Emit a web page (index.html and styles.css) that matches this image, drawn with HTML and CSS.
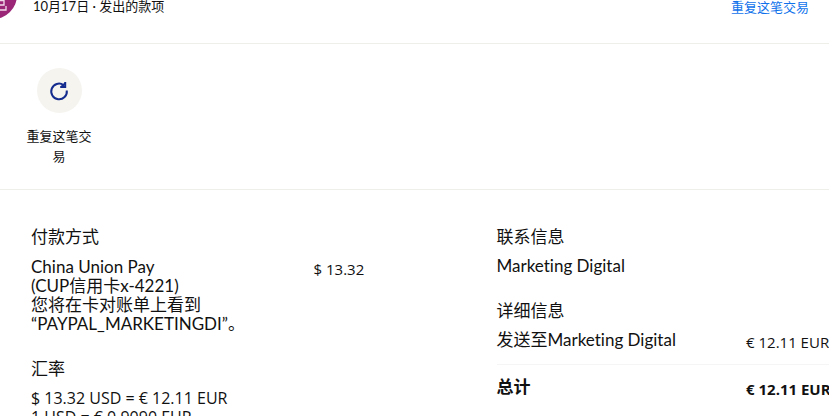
FILE: index.html
```html
<!DOCTYPE html>
<html lang="zh-CN">
<head>
  <meta charset="UTF-8" />
  <meta name="viewport" content="width=device-width, initial-scale=1.0" />
  <title>交易详情</title>
  <link rel="stylesheet" href="styles.css">
</head>
<body>
  <!-- Summary row -->
  <header class="summary">
    <div class="avatar">
      <svg width="28" height="28" viewBox="0 0 28 28" fill="none" stroke="#f3dcec" stroke-width="1.300">
        <path d="M5 7h18v13H5zM5 15.500h18M14 3v22h11v-4" />
      </svg>
    </div>
    <p class="summary-date">10月17日 · 发出的款项</p>
    <a class="repeat-link" href="#">重复这笔交易</a>
  </header>

  <!-- Actions -->
  <section class="actions">
    <button class="action" type="button">
      <span class="action-icon">
        <svg width="20" height="20" viewBox="0 0 20 20" fill="none" stroke="#142c8e" stroke-width="2">
          <path d="M17.800 9.500A7.800 7.800 0 1 1 14.500 4" />
          <path d="M16.200 1v5h-5" />
          <path d="M12.500 5.800L16 2.500" />
        </svg>
      </span>
      <span class="action-label">重复这笔交易</span>
    </button>
  </section>

  <!-- Details -->
  <main class="details">
    <div class="column payment">
      <section class="block">
        <h2>付款方式</h2>
        <div class="row">
          <p>China Union Pay<br>(CUP信用卡x-4221)<br>您将在卡对账单上看到<br>“PAYPAL_MARKETINGDI”。</p>
          <span class="amount">$ 13.32</span>
        </div>
      </section>
      <section class="block">
        <h2>汇率</h2>
        <p class="rate">$ 13.32 USD = € 12.11 EUR<br>1 USD = € 0.9090 EUR</p>
      </section>
    </div>

    <div class="column info">
      <section class="block">
        <h2>联系信息</h2>
        <p>Marketing Digital</p>
      </section>
      <section class="block">
        <h2>详细信息</h2>
        <div class="row">
          <p>发送至Marketing Digital</p>
          <span class="amount">€ 12.11 EUR</span>
        </div>
        <div class="row total">
          <p>总计</p>
          <span class="amount">€ 12.11 EUR</span>
        </div>
      </section>
    </div>
  </main>
</body>
</html>
```

FILE: styles.css
```css
* {
  box-sizing: border-box;
}
html {
  height: 100%;
  overflow: hidden;
}
body {
  margin: 0;
  height: 100%;
  overflow: hidden;
  font-family: Lato, 'Noto Sans CJK SC', sans-serif;
  font-size: 17px;
  font-variant-ligatures: none;
  line-height: 19px;
  color: #111;
  background: #fff;
}
h2, p {
  margin: 0;
}

.summary {
  display: flex;
  align-items: center;
  margin-top: -29px;
  padding: 0 20px 24px 0;
  border-bottom: 1px solid #efefea;
  font-size: 13px;
  line-height: 20px;
}
.avatar {
  display: flex;
  align-items: center;
  justify-content: flex-end;
  width: 48px;
  height: 48px;
  margin-left: -31px;
  padding: 14px 8px 6px;
  border-radius: 50%;
  background: #9b2677;
}
.summary-date {
  flex: 1;
  padding: 22px 0 0 16px;
}
.repeat-link {
  padding-top: 24px;
  color: #1072eb;
  text-decoration: none;
}

.actions {
  padding: 24px 16px 23px;
  border-bottom: 1px solid #efefea;
}
.action {
  display: flex;
  flex-direction: column;
  align-items: center;
  width: 86px;
  padding: 0 8px;
  border: none;
  background: none;
  color: inherit;
  font: inherit;
  font-size: 13px;
  line-height: 20px;
  cursor: pointer;
}
.action-icon {
  display: flex;
  align-items: center;
  justify-content: center;
  width: 45px;
  height: 45px;
  margin-bottom: 13px;
  border-radius: 50%;
  background: #f5f4ef;
}

.details {
  display: grid;
  grid-template-columns: 7fr 5fr;
  padding: 37px 0 0 31px;
}
.block {
  margin-bottom: 26px;
}
.block h2 {
  margin-bottom: 11px;
  font-size: 17px;
  font-weight: 400;
  line-height: 19px;
}
.info h2 {
  margin-bottom: 10px;
}
.row {
  display: flex;
  justify-content: space-between;
}
.amount,
.rate {
  font-family: 'Open Sans', 'Noto Sans CJK SC', sans-serif;
  font-size: 16px;
}
.amount {
  padding-top: 3px;
  font-size: 15px;
  white-space: nowrap;
}
.payment .amount {
  width: 183px;
}
.info .amount {
  width: 83px;
}
.total {
  margin-top: 12px;
  padding-top: 12px;
  border-top: 1px solid #f5f5f5;
  font-weight: 700;
}
```
